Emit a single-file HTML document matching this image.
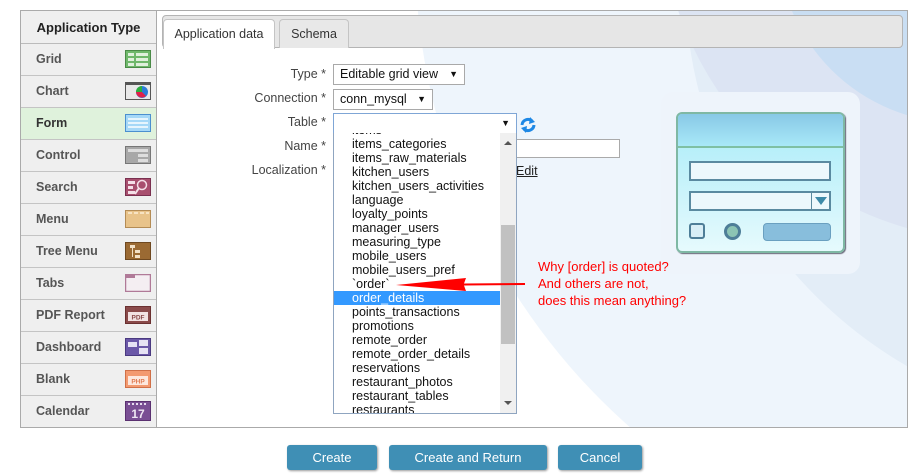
<!DOCTYPE html>
<html style="overflow:hidden;height:475px"><head><meta charset="utf-8"><style>
*{margin:0;padding:0;box-sizing:border-box}
body{width:920px;height:475px;background:#fff;font-family:"Liberation Sans",Arial,sans-serif;position:relative;overflow:hidden;font-size:12px;color:#333}
.abs{position:absolute}
#side{left:20px;top:10px;width:137px;height:418px;border:1px solid #aaa;background:#efefef}
#side .h{height:33px;border-bottom:1px solid #bbb;text-align:center;font-weight:bold;font-size:13px;line-height:33px;color:#222}
#side .r{height:32px;border-bottom:1px solid #c4c4c4;position:relative;font-weight:bold;font-size:12.5px;color:#555;line-height:31px;padding-left:15px}
#side .r.sel{background:#dff2dc;color:#333}
#side .r svg{position:absolute;left:104px;top:6px}
#main{left:157px;top:10px;width:751px;height:418px;border:1px solid #aaa;border-left:none;background:#fff;overflow:hidden}
#tabbar{left:5px;top:4px;width:741px;height:33px;background:#e6e6e6;border:1px solid #b4b4b4;border-radius:4px}
.tab{top:8px;height:30px;border:1px solid #c4c4c4;border-bottom:none;border-radius:4px 4px 0 0;font-size:12.5px;line-height:28px;text-align:center;color:#333}
.lbl{width:140px;text-align:right;font-size:12.5px;color:#444}
.sel1{border:1px solid #a9a9a9;background:#fff;height:21px;font-size:12.5px;line-height:19px;padding-left:6px;color:#111}
.arr{position:absolute;right:6px;top:0;font-size:9px}
#list{left:333px;top:133px;width:184px;height:281px;border:1px solid #8fa5c0;border-top:none;background:#fff;overflow:hidden}
#list .it{height:14px;line-height:14px;font-size:12.5px;padding-left:18px;color:#111;white-space:nowrap}
#list .it.hl{background:#3399ff;color:#fff;width:166px}
.btn{top:445px;height:25px;background:#3f8fb5;color:#fff;font-size:13px;line-height:25px;text-align:center;border-radius:3px;box-shadow:1px 1px 2px #999}
.red{color:#f00;font-size:13px;left:538px}
</style></head><body>
<div id="side" class="abs">
<div class="h">Application Type</div>
<div class="r">Grid<svg width="26" height="18"><rect x=".5" y=".5" width="25" height="17" fill="#6fb86b" stroke="#4a8a47"/><g fill="#dff0dc"><rect x="3" y="3" width="6" height="3"/><rect x="11" y="3" width="12" height="3"/><rect x="3" y="8" width="6" height="3"/><rect x="11" y="8" width="12" height="3"/><rect x="3" y="13" width="6" height="3"/><rect x="11" y="13" width="12" height="3"/></g></svg></div>
<div class="r">Chart<svg width="26" height="18"><rect x=".5" y=".5" width="25" height="17" fill="#e8e8e8" stroke="#555"/><rect x="1" y="1" width="24" height="2" fill="#555"/><circle cx="17" cy="10" r="6" fill="#2a7bd6"/><path d="M17 10L11 10A6 6 0 0 0 21 14Z" fill="#e0204a"/><path d="M17 10L17 4A6 6 0 0 0 11 10Z" fill="#2cae3c"/></svg></div>
<div class="r sel">Form<svg width="26" height="18"><rect x=".5" y=".5" width="25" height="17" fill="#a5d8f7" stroke="#4b8fcf"/><g fill="#e6f5fd"><rect x="3" y="4" width="20" height="2"/><rect x="3" y="8" width="20" height="2"/><rect x="3" y="12" width="20" height="2"/></g></svg></div>
<div class="r">Control<svg width="26" height="18"><rect x=".5" y=".5" width="25" height="17" fill="#a8a8a8" stroke="#777"/><g fill="#ddd"><rect x="3" y="3" width="20" height="3"/><rect x="13" y="8" width="10" height="3"/><rect x="13" y="13" width="10" height="3"/></g></svg></div>
<div class="r">Search<svg width="26" height="18"><rect x=".5" y=".5" width="25" height="17" fill="#a84f6e" stroke="#7a3050"/><g fill="#f4dfe7"><rect x="3" y="3" width="7" height="3"/><rect x="3" y="8" width="5" height="3"/><rect x="3" y="13" width="7" height="3"/></g><circle cx="17" cy="7" r="4.5" fill="none" stroke="#f4dfe7" stroke-width="1.5"/><line x1="14" y1="10" x2="10" y2="16" stroke="#f4dfe7" stroke-width="2"/></svg></div>
<div class="r">Menu<svg width="26" height="18"><rect x=".5" y=".5" width="25" height="17" fill="#e8c38a" stroke="#b48c55"/><g fill="#f7e3c2"><rect x="3" y="2" width="4" height="2"/><rect x="9" y="2" width="4" height="2"/><rect x="15" y="2" width="4" height="2"/><rect x="21" y="2" width="3" height="2"/></g></svg></div>
<div class="r">Tree Menu<svg width="26" height="18"><rect x=".5" y=".5" width="25" height="17" fill="#9b6a33" stroke="#6e4820"/><g fill="#f2e0c6"><rect x="5" y="3" width="5" height="3"/><rect x="10" y="8" width="5" height="3"/><rect x="10" y="13" width="5" height="3"/><rect x="7" y="5" width="1" height="10"/></g></svg></div>
<div class="r">Tabs<svg width="26" height="18"><rect x=".5" y=".5" width="25" height="17" fill="#f4eef2" stroke="#b07a98" stroke-width="1.5"/><rect x="1" y="1" width="9" height="3" fill="#b07a98"/></svg></div>
<div class="r">PDF Report<svg width="26" height="18"><rect x=".5" y=".5" width="25" height="17" fill="#8a4a4a" stroke="#6a3030"/><rect x="3" y="6" width="20" height="9" fill="#f2e2e2"/><text x="13" y="13.5" font-size="6.5" text-anchor="middle" fill="#8a4a4a" font-family="Liberation Sans">PDF</text></svg></div>
<div class="r">Dashboard<svg width="26" height="18"><rect x=".5" y=".5" width="25" height="17" fill="#6b58a8" stroke="#4a3a80"/><g fill="#e6e2f4"><rect x="3" y="4" width="9" height="5"/><rect x="14" y="2" width="9" height="6"/><rect x="14" y="10" width="9" height="6"/></g></svg></div>
<div class="r">Blank<svg width="26" height="18"><rect x=".5" y=".5" width="25" height="17" fill="#f39a70" stroke="#d07048"/><rect x="3" y="6" width="20" height="9" fill="#fde8de"/><text x="13" y="13.5" font-size="6.5" text-anchor="middle" fill="#e07a50" font-family="Liberation Sans">PHP</text></svg></div>
<div class="r" style="border-bottom:none">Calendar<svg width="26" height="20" style="top:5px"><rect x=".5" y=".5" width="25" height="19" fill="#7a4f94" stroke="#5a3070"/><g fill="#e8dcef"><rect x="3" y="2" width="2" height="2"/><rect x="7" y="2" width="2" height="2"/><rect x="11" y="2" width="2" height="2"/><rect x="15" y="2" width="2" height="2"/><rect x="19" y="2" width="2" height="2"/></g><text x="13" y="17" font-size="12" text-anchor="middle" fill="#f0e8f4" font-family="Liberation Sans">17</text></svg></div>
</div>

<div id="main" class="abs">
<svg class="abs" style="left:0;top:0" width="751" height="418">
<circle cx="893" cy="-60" r="635" fill="#eef5fc"/>
<circle cx="973" cy="-30" r="445" fill="#e3edf7"/>
<circle cx="843" cy="-110" r="340" fill="#dce4f3"/>
<circle cx="803" cy="-70" r="182" fill="#c9def3"/>
</svg>
<div id="tabbar" class="abs"></div>
<div class="tab abs" style="left:6px;width:112px;background:#fff">Application data</div>
<div class="tab abs" style="left:122px;width:70px;background:#e8e8e8;height:29px">Schema</div>

<div class="lbl abs" style="left:29px;top:56px">Type *</div>
<div class="lbl abs" style="left:29px;top:80px">Connection *</div>
<div class="lbl abs" style="left:29px;top:104px">Table *</div>
<div class="lbl abs" style="left:29px;top:128px">Name *</div>
<div class="lbl abs" style="left:29px;top:152px">Localization *</div>

<div class="sel1 abs" style="left:176px;top:53px;width:132px">Editable grid view<span class="arr">&#9660;</span></div>
<div class="sel1 abs" style="left:176px;top:78px;width:100px">conn_mysql<span class="arr">&#9660;</span></div>
<div class="sel1 abs" style="left:176px;top:102px;width:184px;border-color:#7fa6d6"><span class="arr">&#9660;</span></div>
<svg class="abs" style="left:362px;top:105px" width="18" height="18"><path d="M3 9A6 6 0 0 1 13 5" fill="none" stroke="#1e88e5" stroke-width="3"/><path d="M11 1L16 6L10 8Z" fill="#1e88e5"/><path d="M15 9A6 6 0 0 1 5 13" fill="none" stroke="#1e88e5" stroke-width="3"/><path d="M7 17L2 12L8 10Z" fill="#1e88e5"/></svg>
<div class="abs" style="left:359px;top:128px;width:104px;height:19px;border:1px solid #aaa;background:#fff"></div>
<div class="abs" style="left:359px;top:153px;font-size:12.5px;color:#222;text-decoration:underline">Edit</div>

<div class="abs" style="left:504px;top:81px;width:199px;height:182px;background:#eef4fb;border-radius:12px"></div>
<div class="abs" style="left:519px;top:101px;width:169px;height:141px;border:2px solid #7fb8a4;border-radius:6px;background:linear-gradient(#a8ecf8,#e6fafd);box-shadow:1px 1px 1px #667"></div>
<div class="abs" style="left:521px;top:103px;width:165px;height:34px;border-radius:4px 4px 0 0;background:linear-gradient(#88c8e6,#a8e8f8);border-bottom:2px solid #7fc0a4"></div>
<div class="abs" style="left:532px;top:150px;width:142px;height:20px;border:2px solid #5a8aa0;background:#ecf8fc"></div>
<div class="abs" style="left:532px;top:180px;width:142px;height:20px;border:2px solid #5a8aa0;background:#ecf8fc"></div>
<div class="abs" style="left:654px;top:182px;width:1px;height:16px;background:#5a8aa0"></div>
<svg class="abs" style="left:656px;top:185px" width="16" height="10"><path d="M2 1H14L8 9Z" fill="#3d8aa8"/></svg>
<div class="abs" style="left:532px;top:212px;width:16px;height:16px;border:2px solid #4e7e98;border-radius:3px;background:#d8eef6"></div>
<div class="abs" style="left:567px;top:212px;width:17px;height:17px;border:3px solid #4e7e98;border-radius:50%;background:#8cc4b4"></div>
<div class="abs" style="left:606px;top:212px;width:68px;height:18px;border:1px solid #6aa0c0;border-radius:4px;background:#88bedc"></div>
</div>

<div id="list" class="abs">
<div style="margin-top:-10px">
<div class="it">items</div>
<div class="it">items_categories</div>
<div class="it">items_raw_materials</div>
<div class="it">kitchen_users</div>
<div class="it">kitchen_users_activities</div>
<div class="it">language</div>
<div class="it">loyalty_points</div>
<div class="it">manager_users</div>
<div class="it">measuring_type</div>
<div class="it">mobile_users</div>
<div class="it">mobile_users_pref</div>
<div class="it">`order`</div>
<div class="it hl">order_details</div>
<div class="it">points_transactions</div>
<div class="it">promotions</div>
<div class="it">remote_order</div>
<div class="it">remote_order_details</div>
<div class="it">reservations</div>
<div class="it">restaurant_photos</div>
<div class="it">restaurant_tables</div>
<div class="it">restaurants</div>
</div>
<div class="abs" style="left:166px;top:0;width:17px;height:281px;background:#f0f0f0"></div>
<div class="abs" style="left:167px;top:92px;width:14px;height:119px;background:#c1c1c1"></div>
<svg class="abs" style="left:167px;top:5px" width="14" height="10"><path d="M3 7H11L7 3Z" fill="#555"/></svg>
<svg class="abs" style="left:167px;top:265px" width="14" height="10"><path d="M3 3H11L7 7Z" fill="#555"/></svg>
</div>

<svg class="abs" style="left:380px;top:270px" width="150" height="30"><path d="M145 13L84 13.5L86 8L16 15L86 21L84 15.5L145 15Z" fill="#f00"/></svg>
<div class="red abs" style="top:259px">Why [order] is quoted?</div>
<div class="red abs" style="top:276px">And others are not,</div>
<div class="red abs" style="top:293px">does this mean anything?</div>

<div class="btn abs" style="left:287px;width:90px">Create</div>
<div class="btn abs" style="left:389px;width:158px">Create and Return</div>
<div class="btn abs" style="left:558px;width:84px">Cancel</div>
</body></html>
